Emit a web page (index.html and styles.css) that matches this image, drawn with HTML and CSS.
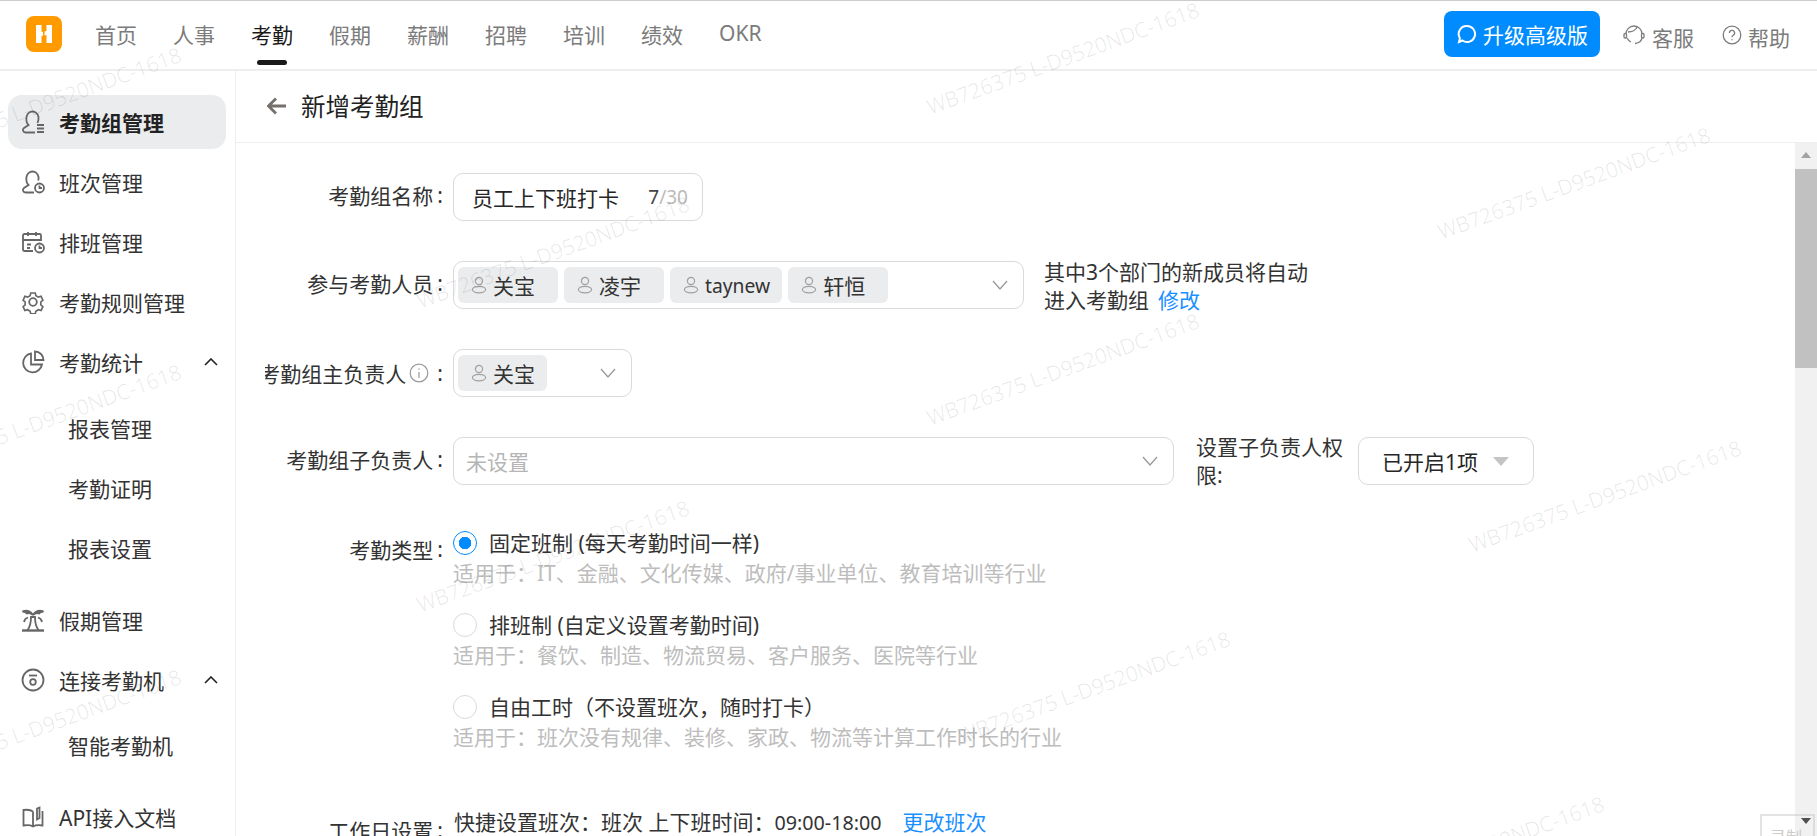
FILE: index.html
```html
<!DOCTYPE html>
<html lang="zh-CN">
  <head>
    <meta charset="utf-8" />
    <title>新增考勤组</title>
    <link rel="stylesheet" href="styles.css">
  </head>
  <body>
    <svg class="sprites" width="0" height="0">
      <symbol id="i-person" viewBox="0 0 16 18">
        <circle cx="8" cy="5" r="3.6" />
        <ellipse cx="8" cy="13.6" rx="6.6" ry="3.2" />
      </symbol>
      <symbol id="i-chevron" viewBox="0 0 16 10">
        <path d="M1 1l7 8 7-8" />
      </symbol>
    </svg>

    <header class="topbar">
      <div class="logo">
        <svg viewBox="0 0 36 36" width="36" height="36">
          <rect width="36" height="36" rx="8" fill="#ff9a00" />
          <path d="M10 9h5.500v7l5-1V9H26v18h-5.500v-8l-5 1v7H10z" fill="#fff" />
          <path d="M17 9h2l-1 18h-1z" fill="#ff9a00" />
        </svg>
      </div>
      <nav class="topnav">
        <a>首页</a>
        <a>人事</a>
        <a class="is-active">考勤</a>
        <a>假期</a>
        <a>薪酬</a>
        <a>招聘</a>
        <a>培训</a>
        <a>绩效</a>
        <a>OKR</a>
      </nav>
      <div class="topbar-right">
        <button class="upgrade">
          <svg viewBox="0 0 20 20" width="20" height="20">
            <path d="M10 2a8 8 0 1 1-4.600 14.500L2 18l.9-3.800A8 8 0 0 1 10 2z" />
          </svg>
          升级高级版
        </button>
        <a class="toplink">
          <svg viewBox="0 0 24 24" width="24" height="24">
            <path d="M4 11a8 8 0 0 1 16 0" />
            <path d="M15 4c-1 3-5 5-9 5" />
            <path d="M20 14c0 4-3 6-7 6.500" />
            <path d="M5 15c1 2 2 3 4 4" />
            <rect x="2" y="10.500" width="2.500" height="4.500" rx="1" />
            <rect x="19.500" y="10.500" width="2.500" height="4.500" rx="1" />
          </svg>
          客服
        </a>
        <a class="toplink">
          <svg viewBox="0 0 20 20" width="20" height="20">
            <circle cx="10" cy="10" r="8.800" />
            <path d="M7.400 8a2.600 2.600 0 1 1 3.900 2.200c-.9.500-1.300 1-1.300 2" />
            <path d="M10 14.200v1" />
          </svg>
          帮助
        </a>
      </div>
    </header>

    <div class="main">
      <aside class="sidebar">
        <a class="menu-item is-active">
          <svg class="menu-icon" viewBox="0 0 24 24"><path d="M14 22.500H4.500c-2.500 0-3.500-3-1.500-4.500l4.500-3C5.500 13 5 10 5.500 7 6 4 8.500 1.500 11.500 1.500S17 4 17.500 7c.3 2-.2 4-1 6" /><path d="M16 15h7M16 18.500h7M16 22h7" /></svg>
          考勤组管理
        </a>
        <a class="menu-item">
          <svg class="menu-icon" viewBox="0 0 24 24"><path d="M13 22.500H4.500c-2.500 0-3.500-3-1.500-4.500l4.500-3C5.500 13 5 10 5.500 7 6 4 8.500 1.500 11.500 1.500S17 4 17.500 7c.2 1.200 0 2.500-.3 3.500" /><circle cx="18.500" cy="18" r="4.500" /><path d="M18.500 15.500V18H21" /></svg>
          班次管理
        </a>
        <a class="menu-item">
          <svg class="menu-icon" viewBox="0 0 24 24"><path d="M12 21H3.500A1.500 1.500 0 0 1 2 19.500V5.500A1.500 1.500 0 0 1 3.500 4h15A1.500 1.500 0 0 1 20 5.500V11" /><path d="M7 2v4M15 2v4M2 10h18M6 14.500h4M6 18h3" /><circle cx="18.500" cy="18" r="4.500" /><path d="M18.500 15.500V18H21" /></svg>
          排班管理
        </a>
        <a class="menu-item">
          <svg class="menu-icon" viewBox="0 0 24 24"><path d="M9.500 2h5l.7 3 2.800 1.600 3-.9 2 4.300-2.300 2v3.200l2.300 2-2 4.300-3-.9-2.800 1.600-.7 3h-5l-.7-3L6 20.600l-3 .9-2-4.300 2.300-2v-3.200L1 10l2-4.300 3 .9L8.800 5z" transform="translate(1.200 1.200) scale(.9)" /><circle cx="12" cy="12" r="3.800" /></svg>
          考勤规则管理
        </a>
        <div class="menu-group">
          <a class="menu-item">
            <svg class="menu-icon" viewBox="0 0 24 24"><path d="M10 3.500a9.500 9.500 0 1 0 11 11H10z" /><path d="M14 1.500a8.500 8.500 0 0 1 8.500 8.500H14z" /></svg>
            考勤统计
            <svg class="menu-caret" viewBox="0 0 14 8"><path d="M1 7l6-6 6 6" /></svg>
          </a>
          <div class="submenu">
            <a class="menu-item menu-item--sub">报表管理</a>
            <a class="menu-item menu-item--sub">考勤证明</a>
            <a class="menu-item menu-item--sub">报表设置</a>
          </div>
        </div>
        <a class="menu-item">
          <svg class="menu-icon" viewBox="0 0 24 24"><path d="M1 22.500h22" stroke-width="2.400" /><path d="M6.500 22c2.500-3 3.500-8 3.500-13h4c0 5 1 10 3.500 13" /><path class="solid" d="M12 7C10 3 6 1.500 1.500 3.500c2 0 3.500.5 4.500 2 2-1 4-.5 6 1.500zM12 7c2-4 6-5.500 10.500-3.500-2 0-3.500.5-4.500 2-2-1-4-.5-6 1.500z" /><path d="M7 9.500c-2 .5-3.500 2-4 4.500M17 9.500c2 .5 3.500 2 4 4.500" /></svg>
          假期管理
        </a>
        <div class="menu-group">
          <a class="menu-item">
            <svg class="menu-icon" viewBox="0 0 24 24"><circle cx="12" cy="12" r="10.500" /><path d="M8 7.500h8" /><circle cx="12" cy="14" r="2.800" /></svg>
            连接考勤机
            <svg class="menu-caret" viewBox="0 0 14 8"><path d="M1 7l6-6 6 6" /></svg>
          </a>
          <div class="submenu submenu--tight">
            <a class="menu-item menu-item--sub">智能考勤机</a>
          </div>
        </div>
        <a class="menu-item">
          <svg class="menu-icon" viewBox="0 0 24 24"><path d="M12 6.500C10 5 6 4.500 2.500 5v15.500c3.500-.5 7-.5 9.500 1 2.500-1.500 6-1.500 9.500-1V6" /><path d="M12 6.500v15M16 3.500v11l2.500-1.500V2.500z" /></svg>
          API接入文档
        </a>
      </aside>

      <section class="content">
        <div class="page-head">
          <svg class="back" viewBox="0 0 20 18" width="20" height="18"><path d="M19 9H2M9 1.500L1.500 9 9 16.500" /></svg>
          <h1>新增考勤组</h1>
        </div>

        <div class="page-body">
          <form class="form">
            <div class="row">
              <label class="label">考勤组名称<span class="colon">:</span></label>
              <div class="box box--name">
                <span class="value">员工上下班打卡</span>
                <span class="counter">7<i>/30</i></span>
              </div>
            </div>

            <div class="row">
              <label class="label">参与考勤人员<span class="colon">:</span></label>
              <div class="box box--members">
                <span class="tag"><svg class="person"><use href="#i-person" /></svg>关宝</span>
                <span class="tag"><svg class="person"><use href="#i-person" /></svg>凌宇</span>
                <span class="tag tag--latin"><svg class="person"><use href="#i-person" /></svg>taynew</span>
                <span class="tag"><svg class="person"><use href="#i-person" /></svg>轩恒</span>
                <svg class="chevron"><use href="#i-chevron" /></svg>
              </div>
              <p class="note">其中3个部门的新成员将自动<br />进入考勤组<a class="link">修改</a></p>
            </div>

            <div class="row">
              <label class="label label--info">考勤组主负责人<svg class="info" viewBox="0 0 20 20" width="20" height="20"><circle cx="10" cy="10" r="8.800" /><path d="M10 9v6M10 5.500v1.200" /></svg><span class="colon">:</span></label>
              <div class="box box--owner">
                <span class="tag tag--owner"><svg class="person"><use href="#i-person" /></svg>关宝</span>
                <svg class="chevron"><use href="#i-chevron" /></svg>
              </div>
            </div>

            <div class="row">
              <label class="label">考勤组子负责人<span class="colon">:</span></label>
              <div class="box box--sub">
                <span class="placeholder">未设置</span>
                <svg class="chevron"><use href="#i-chevron" /></svg>
              </div>
              <div class="perm-label">设置子负责人权限:</div>
              <div class="box box--perm">
                <span class="value">已开启1项</span>
                <span class="triangle"></span>
              </div>
            </div>

            <div class="row row--types">
              <label class="label label--type">考勤类型<span class="colon">:</span></label>
              <div class="types">
                <div class="type">
                  <div class="radio-line"><span class="radio is-checked"></span>固定班制 (每天考勤时间一样)</div>
                  <div class="hint">适用于：IT、金融、文化传媒、政府/事业单位、教育培训等行业</div>
                </div>
                <div class="type">
                  <div class="radio-line"><span class="radio"></span>排班制 (自定义设置考勤时间)</div>
                  <div class="hint">适用于：餐饮、制造、物流贸易、客户服务、医院等行业</div>
                </div>
                <div class="type">
                  <div class="radio-line"><span class="radio"></span>自由工时（不设置班次，随时打卡）</div>
                  <div class="hint">适用于：班次没有规律、装修、家政、物流等计算工作时长的行业</div>
                </div>
              </div>
            </div>

            <div class="row row--workday">
              <label class="label label--day">工作日设置<span class="colon">:</span></label>
              <div class="workday">快捷设置班次：班次 上下班时间：<span class="time">09:00-18:00</span><a class="link link--wide">更改班次</a></div>
            </div>
          </form>

          <div class="scrollbar">
            <span class="scroll-up"></span>
            <span class="scroll-thumb"></span>
            <span class="scroll-down"></span>
          </div>
        </div>
      </section>
    </div>

    <div class="recorder">录制</div>

    <div class="watermarks">
      <span class="wm wm-1">WB726375 L-D9520NDC-1618</span>
      <span class="wm wm-2">WB726375 L-D9520NDC-1618</span>
      <span class="wm wm-3">WB726375 L-D9520NDC-1618</span>
      <span class="wm wm-4">WB726375 L-D9520NDC-1618</span>
      <span class="wm wm-5">WB726375 L-D9520NDC-1618</span>
      <span class="wm wm-6">WB726375 L-D9520NDC-1618</span>
      <span class="wm wm-7">WB726375 L-D9520NDC-1618</span>
      <span class="wm wm-8">WB726375 L-D9520NDC-1618</span>
      <span class="wm wm-9">WB726375 L-D9520NDC-1618</span>
      <span class="wm wm-10">WB726375 L-D9520NDC-1618</span>
      <span class="wm wm-11">WB726375 L-D9520NDC-1618</span>
    </div>
  </body>
</html>
```

FILE: styles.css
```css
:root {
  --color-blue: #008cff;
  --color-link: #1a8fff;
  --color-text: #262626;
  --color-nav: #7b7b7b;
  --color-line: #d9d9d9;
  --color-divider: #eeeeee;
  --color-tag: #ebecee;
  --font-base: "Noto Sans", "Noto Sans CJK SC", sans-serif;
}

* {
  box-sizing: border-box;
}

html,
body {
  margin: 0;
  height: 100%;
  overflow: hidden;
}

body {
  position: relative;
  display: flex;
  flex-direction: column;
  background: #fff;
  color: var(--color-text);
  font-family: var(--font-base);
  font-size: 21px;
}

.sprites {
  position: absolute;
}

/* top bar */
.topbar {
  flex: none;
  display: flex;
  align-items: center;
  height: 71px;
  padding: 0 27px 2px 26px;
  border-top: 1px solid #cccccc;
  border-bottom: 2px solid var(--color-divider);
}
.logo {
  display: flex;
  margin-right: 33px;
}
.topnav {
  display: flex;
  gap: 36px;
  color: var(--color-nav);
}
.topnav a {
  position: relative;
}
.topnav .is-active {
  color: #1a1a1a;
}
.topnav .is-active::after {
  content: "";
  position: absolute;
  left: 6px;
  right: 6px;
  bottom: -16px;
  height: 5px;
  border-radius: 3px;
  background: #1a1a1a;
}
.topbar-right {
  display: flex;
  align-items: center;
  margin-left: auto;
}
.upgrade {
  display: flex;
  align-items: center;
  gap: 6px;
  height: 46px;
  width: 156px;
  padding: 0 0 0 13px;
  margin-right: 22px;
  border: 0;
  border-radius: 8px;
  background: var(--color-blue);
  color: #fff;
  font: inherit;
}
.upgrade svg {
  fill: none;
  stroke: #fff;
  stroke-width: 2;
}
.toplink {
  display: flex;
  align-items: center;
  gap: 6px;
  color: var(--color-nav);
  padding-top: 5px;
}
.toplink + .toplink {
  margin-left: 28px;
}
.toplink svg {
  fill: none;
  stroke: #7d7d7d;
  stroke-width: 1.3;
  margin-top: -4px;
}

/* layout */
.main {
  flex: 1;
  display: flex;
  min-height: 0;
}

/* side menu */
.sidebar {
  flex: none;
  width: 236px;
  padding: 24px 9px 0 8px;
  border-right: 1px solid var(--color-divider);
  display: flex;
  flex-direction: column;
  gap: 6px;
  overflow: hidden;
}
.menu-group {
  display: flex;
  flex-direction: column;
}
.menu-item {
  flex: none;
  display: flex;
  align-items: center;
  height: 54px;
  padding-left: 13px;
  border-radius: 14px;
  color: #333;
}
.menu-item.is-active {
  background: var(--color-tag);
  font-weight: 700;
  color: #222;
}
.menu-icon {
  flex: none;
  width: 24px;
  height: 24px;
  margin-right: 14px;
  fill: none;
  stroke: #666;
  stroke-width: 1.8;
}
.menu-icon .solid {
  fill: #666;
}
.menu-caret {
  width: 14px;
  height: 8px;
  margin-left: auto;
  margin-right: 8px;
  fill: none;
  stroke: #222;
  stroke-width: 1.6;
}
.submenu {
  display: flex;
  flex-direction: column;
  gap: 6px;
  padding: 12px 0 12px;
}
.submenu--tight {
  padding-top: 11px;
}
.menu-item--sub {
  padding-left: 60px;
}

/* page */
.content {
  flex: 1;
  display: flex;
  flex-direction: column;
  min-width: 0;
}
.page-head {
  flex: none;
  display: flex;
  align-items: center;
  height: 72px;
  padding: 0 0 2px 31px;
  border-bottom: 1px solid var(--color-divider);
}
.page-head h1 {
  margin: 0 0 0 14px;
  font-size: 24.5px;
  font-weight: 400;
  color: #222;
}
.back {
  fill: none;
  stroke: #75706c;
  stroke-width: 2.8;
}
.page-body {
  flex: 1;
  display: flex;
  min-height: 0;
}

/* form */
.form {
  flex: 1;
  min-width: 0;
  display: flex;
  flex-direction: column;
  gap: 40px;
  padding: 30px 0 0 29px;
  overflow: hidden;
}
.row {
  flex: none;
  display: flex;
  align-items: center;
  height: 48px;
}
.label {
  flex: none;
  display: flex;
  align-items: center;
  justify-content: flex-end;
  width: 178px;
  margin-right: 10px;
  padding-bottom: 4px;
  overflow: hidden;
  white-space: nowrap;
  color: #333;
}
.label--info {
  padding-bottom: 0;
}
.colon {
  margin-left: 4px;
}
.info {
  flex: none;
  margin-left: 3px;
  fill: none;
  stroke: #999;
  stroke-width: 1.2;
}
.info + .colon {
  margin-left: 8px;
}
.box {
  flex: none;
  display: flex;
  align-items: center;
  height: 48px;
  padding: 0 4px;
  border: 1px solid var(--color-line);
  border-radius: 10px;
}
.box--name {
  width: 250px;
  padding: 0 14px 0 18px;
}
.counter {
  margin-left: auto;
  font-size: 19px;
  color: #444;
}
.counter i {
  font-style: normal;
  color: #bbb;
}
.box--members {
  width: 571px;
  gap: 6px;
}
.box--owner {
  width: 179px;
}
.box--sub {
  width: 721px;
  padding-left: 12px;
}
.box--perm {
  width: 176px;
  padding: 0 24px 0 23px;
}
.tag {
  flex: none;
  display: flex;
  align-items: center;
  height: 36px;
  padding: 0 23px 0 13px;
  border-radius: 6px;
  background: var(--color-tag);
  color: #333;
  white-space: nowrap;
}
.tag--latin {
  padding-right: 12px;
  font-size: 19.3px;
}
.tag--owner {
  padding-right: 12px;
}
.person {
  flex: none;
  width: 16px;
  height: 18px;
  margin-right: 6px;
  fill: none;
  stroke: #a0a0a0;
  stroke-width: 1.2;
}
.chevron {
  flex: none;
  width: 16px;
  height: 10px;
  margin-left: auto;
  margin-right: 11px;
  fill: none;
  stroke: #999;
  stroke-width: 1.3;
}
.placeholder {
  color: #b5b5b5;
}
.note {
  margin: 2px 0 0 20px;
  line-height: 28px;
  color: #333;
}
.link {
  color: var(--color-link);
  margin-left: 9px;
}
.link--wide {
  margin-left: 21px;
}
.perm-label {
  flex: none;
  width: 150px;
  margin: 0 12px 0 22px;
  line-height: 28px;
  color: #333;
}
.triangle {
  margin-left: auto;
  border-left: 8px solid transparent;
  border-right: 8px solid transparent;
  border-top: 9px solid #c4c4c4;
}

/* attendance type */
.row--types {
  align-items: flex-start;
  height: auto;
  margin-top: 6px;
}
.label--type {
  padding: 3px 0 0;
}
.types {
  display: flex;
  flex-direction: column;
  gap: 23px;
}
.type {
  display: flex;
  flex-direction: column;
  gap: 2px;
}
.radio-line {
  display: flex;
  align-items: center;
  gap: 12px;
  height: 24px;
  padding-bottom: 3px;
  white-space: pre;
  color: #333;
}
.radio {
  flex: none;
  width: 24px;
  height: 24px;
  margin-bottom: -3px;
  border: 1px solid var(--color-line);
  border-radius: 50%;
  background: #fff;
}
.radio.is-checked {
  border-color: var(--color-blue);
  background: radial-gradient(circle, var(--color-blue) 0 6px, #fff 6.5px);
}
.hint {
  height: 33px;
  line-height: 33px;
  color: #bdbdbd;
}
.row--workday {
  align-items: flex-start;
  height: auto;
  margin-top: 12px;
}
.label--day {
  padding: 9px 0 0;
}
.workday {
  margin-left: 1px;
  color: #333;
  white-space: nowrap;
}
.time {
  font-size: 19.7px;
}

.scrollbar {
  flex: none;
  display: flex;
  flex-direction: column;
  width: 22px;
  background: #f1f1f1;
}
.scroll-up,
.scroll-down {
  flex: none;
  position: relative;
  height: 26px;
}
.scroll-up::after,
.scroll-down::after {
  content: "";
  position: absolute;
  left: 6px;
  top: 9px;
  border-left: 5px solid transparent;
  border-right: 5px solid transparent;
}
.scroll-up::after {
  border-bottom: 6px solid #a3a3a3;
}
.scroll-down::after {
  top: 8px;
  border-top: 6px solid #505050;
}
.scroll-thumb {
  flex: none;
  height: 199px;
  background: #c1c1c1;
  margin-bottom: auto;
}

/* overlays */
.recorder {
  position: absolute;
  left: 1760px;
  top: 814px;
  width: 55px;
  height: 40px;
  padding: 8px 0 0 8px;
  border: 2px solid rgba(200, 200, 200, 0.5);
  color: #ccc;
  font-size: 16px;
  pointer-events: none;
}
.watermarks {
  position: absolute;
  inset: 0;
  overflow: hidden;
  pointer-events: none;
}
.wm {
  position: absolute;
  width: 300px;
  margin: -13px 0 0 -150px;
  text-align: center;
  white-space: nowrap;
  font-size: 21px;
  font-weight: 300;
  line-height: 26px;
  color: rgba(0, 0, 0, 0.1);
  transform: rotate(-20deg);
}
.wm-1 { left: 45px; top: 103px; }
.wm-2 { left: 45px; top: 420px; }
.wm-3 { left: 45px; top: 725px; }
.wm-4 { left: 553px; top: 252px; }
.wm-5 { left: 553px; top: 556px; }
.wm-6 { left: 1063px; top: 58px; }
.wm-7 { left: 1063px; top: 369px; }
.wm-8 { left: 1094px; top: 687px; }
.wm-9 { left: 1574px; top: 183px; }
.wm-10 { left: 1605px; top: 496px; }
.wm-11 { left: 1468px; top: 852px; }
```
